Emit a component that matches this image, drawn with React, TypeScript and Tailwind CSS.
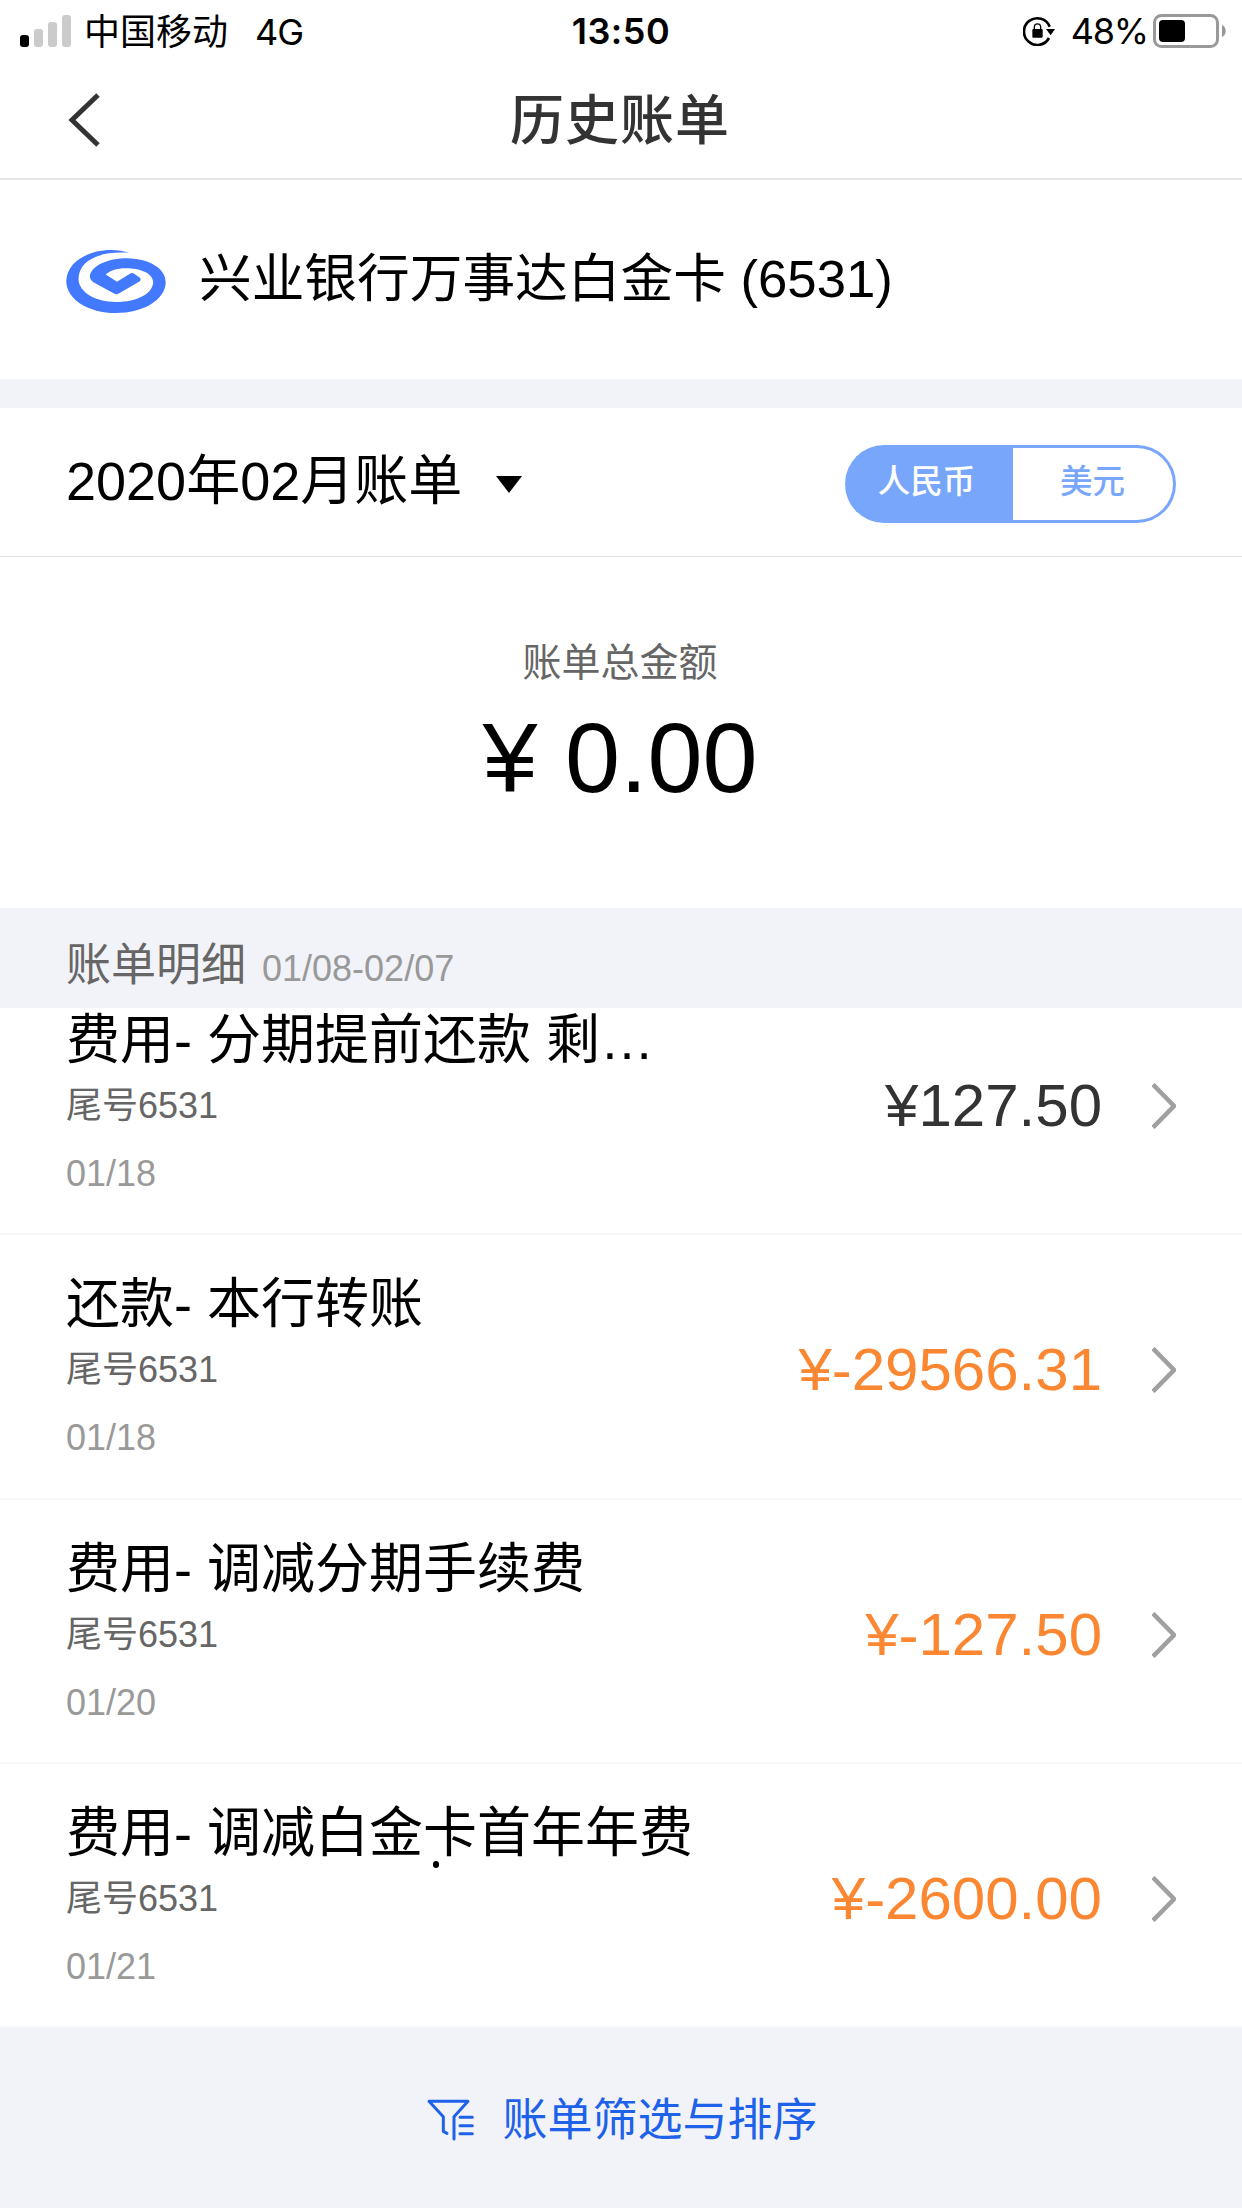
import { useState } from "react"
import clsx from "clsx"

type Bill = {
  id: number
  title: string
  tail: string
  date: string
  amount: string
  refund: boolean
}

const bills: Bill[] = [
  { id: 1, title: "费用- 分期提前还款 剩…", tail: "6531", date: "01/18", amount: "127.50", refund: false },
  { id: 2, title: "还款- 本行转账", tail: "6531", date: "01/18", amount: "-29566.31", refund: true },
  { id: 3, title: "费用- 调减分期手续费", tail: "6531", date: "01/20", amount: "-127.50", refund: true },
  { id: 4, title: "费用- 调减白金卡首年年费", tail: "6531", date: "01/21", amount: "-2600.00", refund: true },
]

function StatusBar() {
  return (
    <div className="grid h-[60px] grid-cols-3 items-center pl-5 pr-[15px] font-['Inter','Noto_Sans_CJK_SC',sans-serif] text-[36px] leading-[60px] text-black">
      <div className="flex items-center">
        <div className="flex h-8 items-end gap-[5px]">
          <span className="h-3 w-[9px] rounded-[3px] bg-black" />
          <span className="h-[18px] w-[9px] rounded-[3px] bg-[#cbcbcb]" />
          <span className="h-[25px] w-[9px] rounded-[3px] bg-[#cbcbcb]" />
          <span className="h-8 w-[9px] rounded-[3px] bg-[#cbcbcb]" />
        </div>
        <span className="ml-[13px] pt-0.5">中国移动</span>
        <span className="ml-[27px] pt-px tracking-[-1px]">4G</span>
      </div>
      <div className="pr-[5px] text-center font-semibold tracking-[0.5px]">13:50</div>
      <div className="flex items-center justify-end">
        <svg className="h-[30px] w-8" viewBox="0 0 96 90" fill="none">
          <path d="M78 66A40 40 0 1 1 80 32" stroke="#000" strokeWidth="8" />
          <path d="M69 39h27L83 58z" fill="#000" />
          <rect x="28" y="39" width="31" height="26" rx="3" fill="#000" />
          <path d="M34 40v-7a9 9 0 0 1 19 0v7" stroke="#000" strokeWidth="4" />
        </svg>
        <span className="ml-4 tracking-[-1.2px]">48%</span>
        <svg className="ml-[5px] h-[34px] w-[74px]" viewBox="0 0 74 34" fill="none">
          <rect x="1.5" y="1.5" width="63" height="31" rx="7" stroke="#999" strokeWidth="3" />
          <rect x="6" y="6" width="26" height="22" rx="4" fill="#000" />
          <path d="M69 11c5 2 5 10 0 12z" fill="#999" />
        </svg>
      </div>
    </div>
  )
}

function BankLogo() {
  return (
    <svg className="mt-[3px] h-[63px] w-[100px] shrink-0" viewBox="78 88 300 190">
      <path
        fill="#4379ff"
        d="M268 97C235 94 196 97 168 108C132 122 115 146 115 178C117 215 165 245 228 245C292 245 340 220 340 184C338 157 300 143 258 143C230 143 208 151 197 162L231 184L271 159Q277 156 283 160L299 171Q305 176 300 182L239 218Q231 224 222 219L160 185Q150 179 149 167C153 136 203 113 262 113C330 115 378 144 378 186C376 240 308 278 228 278C145 278 78 236 78 182C79 126 142 88 212 88Q245 88 268 97Z"
      />
    </svg>
  )
}

function BillRow({ bill }: { bill: Bill }) {
  return (
    <li className="flex h-[264.25px] items-center justify-between border-b-2 border-[#f7f7f7] pl-[66px] pr-[66px] last:border-white">
      <div className="flex flex-col">
        <span className="whitespace-nowrap text-[54px] leading-[72px] text-black">{bill.title}</span>
        <span className="mt-1 text-[36px] leading-[52px] text-[#666]">尾号{bill.tail}</span>
        <span className="mt-4 text-[36px] leading-[52px] text-[#999]">{bill.date}</span>
      </div>
      <div className="flex items-center pt-2">
        <span className={clsx("text-[60px] leading-[70px]", bill.refund ? "text-[#fc8732]" : "text-[#333]")}>
          ¥{bill.amount}
        </span>
        <svg className="ml-[50px] h-[46px] w-6" viewBox="0 0 24 46" fill="none">
          <path d="M1 1.5L22 23L1 44.5" stroke="#a0a0a0" strokeWidth="4.5" />
        </svg>
      </div>
    </li>
  )
}

export default function App() {
  const [currency, setCurrency] = useState<"cny" | "usd">("cny")

  return (
    <div className="flex h-[2208px] w-[1242px] flex-col overflow-hidden bg-white font-['Liberation_Sans','Noto_Sans_CJK_SC',sans-serif]">
      <StatusBar />

      <header className="grid h-[120px] grid-cols-3 items-center border-b-2 border-[#e5e5e5] px-[68px]">
        <button className="justify-self-start pt-0.5">
          <svg className="h-[54px] w-8" viewBox="0 0 32 54" fill="none">
            <path d="M30 2L4 27L30 52" stroke="#333" strokeWidth="5" />
          </svg>
        </button>
        <h1 className="whitespace-nowrap pr-0.5 pt-1 text-center text-[54px] font-medium leading-[80px] tracking-[1px] text-[#333]">历史账单</h1>
      </header>

      <section className="flex h-[199px] items-center pl-[66px]">
        <BankLogo />
        <span className="ml-[33px] pb-px text-[52.7px] leading-[76px] text-black">兴业银行万事达白金卡 (6531)</span>
      </section>

      <div className="h-[29px] bg-[#f2f3f8]" />

      <section className="flex h-[149px] items-center justify-between border-b border-[#ddd] pl-[66px] pr-[66px]">
        <button className="flex items-center pb-0.5 text-[54px] leading-[76px] text-black">
          2020年02月账单
          <svg className="ml-[34px] mt-1.5 h-[17px] w-[26px]" viewBox="0 0 26 17">
            <path d="M0 0h26L13 17z" />
          </svg>
        </button>
        <div className="mt-[3px] flex h-[78px] w-[331px] text-[32.5px] font-medium leading-[66px]">
          <button
            onClick={() => setCurrency("cny")}
            className={clsx(
              "w-[168px] rounded-l-full border-y-[3px] border-l-[3px] border-[#78a6fb] pb-1 pr-2",
              currency === "cny" ? "bg-[#78a6fb] text-white" : "text-[#78a6fb]"
            )}
          >
            人民币
          </button>
          <button
            onClick={() => setCurrency("usd")}
            className={clsx(
              "flex-1 rounded-r-full border-y-[3px] border-r-[3px] border-[#78a6fb] pb-1 pr-px",
              currency === "usd" ? "bg-[#78a6fb] text-white" : "text-[#78a6fb]"
            )}
          >
            美元
          </button>
        </div>
      </section>

      <section className="flex h-[351px] flex-col items-center pr-0.5 pt-[78px]">
        <span className="text-[39px] leading-[56px] text-[#666]">账单总金额</span>
        <span className="mt-[10px] text-[99px] leading-[114px] text-black">¥ 0.00</span>
      </section>

      <div className="z-10 flex h-[100px] shrink-0 items-baseline bg-[#f2f3f8] pl-[66px] pt-[26px]">
        <span className="text-[45px] leading-[64px] text-[#666]">账单明细</span>
        <span className="ml-4 text-[36px] text-[#999]">01/08-02/07</span>
      </div>

      {/* the list is scrolled a little, its first row sits under the section bar */}
      <ul className="relative -mt-[37px] shrink-0">
        {bills.map(b => (
          <BillRow key={b.id} bill={b} />
        ))}
        <span className="absolute left-[433px] top-[890px] h-[7px] w-[6px] rounded-full bg-black" />
      </ul>

      <footer className="flex flex-1 items-center justify-center bg-[#f2f3f8] pl-[3px] pt-1.5 text-[#1f62ea]">
        <svg className="mb-[3px] h-[42px] w-12" viewBox="0 0 144 126" fill="none" stroke="currentColor" strokeWidth="9" strokeLinecap="round" strokeLinejoin="round">
          <path d="M81 120V53L123 7H6L49 53V97L60 103" />
          <path d="M99 55h37M99 80h37M99 104h37" />
        </svg>
        <span className="ml-[27px] text-[45px] leading-[64px]">账单筛选与排序</span>
      </footer>
    </div>
  )
}
